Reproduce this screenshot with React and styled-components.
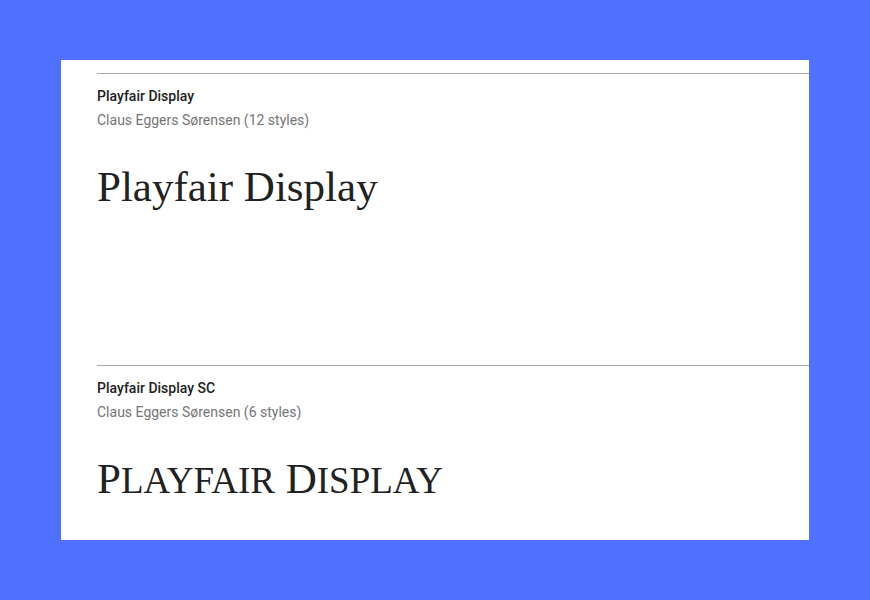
import styled, { createGlobalStyle } from 'styled-components'

const GlobalStyle = createGlobalStyle`
  html, body {
    margin: 0;
    padding: 0;
    background: #5070ff;
  }
  body {
    width: 870px;
    height: 600px;
    overflow: hidden;
    font-family: Roboto, 'Liberation Sans', sans-serif;
  }
`

const Page = styled.div`
  height: 600px;
  padding: 60px 61px;
  box-sizing: border-box;
`

const Card = styled.div`
  height: 480px;
  background: #ffffff;
  padding: 13px 0 0 36px;
  box-sizing: border-box;
  overflow: hidden;
`

const FontEntry = styled.section`
  height: 292px;
  border-top: 1px solid #a8a8a8;
  padding-top: 12px;
  box-sizing: border-box;
`

const FamilyName = styled.div`
  font-size: 14px;
  line-height: 20px;
  font-weight: 500;
  color: #212121;
`

const Designer = styled.div`
  margin-top: 4px;
  font-size: 14px;
  line-height: 20px;
  color: #757575;
`

const Specimen = styled.div`
  margin-top: 32px;
  font-family: 'Liberation Serif', 'DejaVu Serif', serif;
  font-size: 43px;
  line-height: 50px;
  color: #212121;
  white-space: nowrap;
`

const SmallCaps = styled.span`
  font-size: ${(props) => props.scale || 0.86}em;
  text-transform: uppercase;
`

const fonts = [
  {
    name: 'Playfair Display',
    designer: 'Claus Eggers Sørensen',
    styles: 12,
    sample: <>Playfair Display</>,
  },
  {
    name: 'Playfair Display SC',
    designer: 'Claus Eggers Sørensen',
    styles: 6,
    sample: (
      <>
        P<SmallCaps>layfair</SmallCaps> D<SmallCaps>isplay</SmallCaps>
      </>
    ),
  },
]

export default function App() {
  return (
    <>
      <GlobalStyle />
      <Page>
        <Card>
          {fonts.map((font) => (
            <FontEntry key={font.name}>
              <FamilyName>{font.name}</FamilyName>
              <Designer>
                {font.designer} ({font.styles} styles)
              </Designer>
              <Specimen>{font.sample}</Specimen>
            </FontEntry>
          ))}
        </Card>
      </Page>
    </>
  )
}
